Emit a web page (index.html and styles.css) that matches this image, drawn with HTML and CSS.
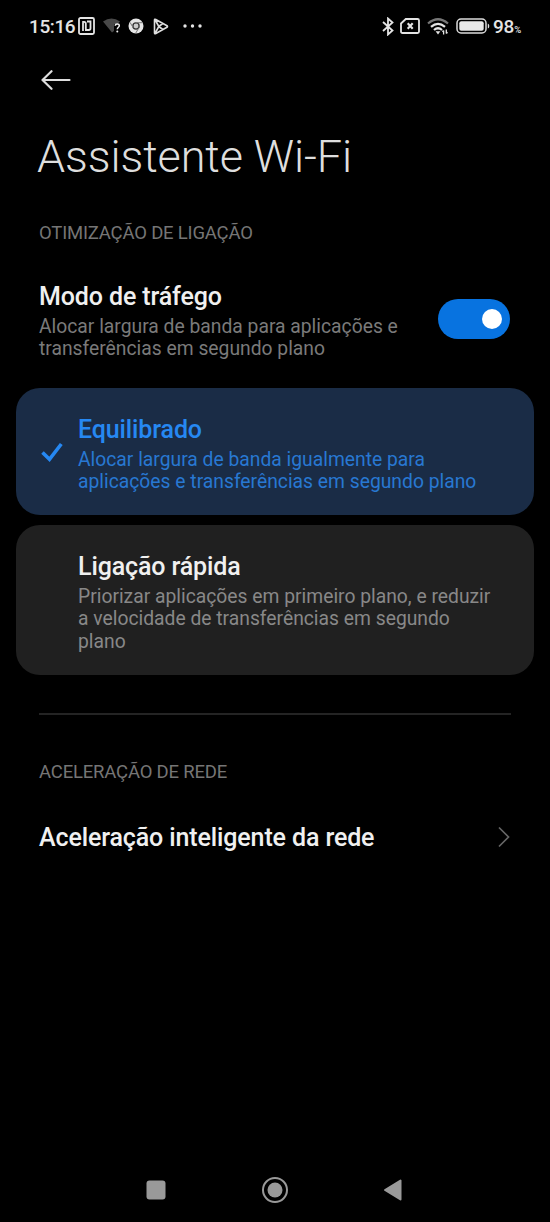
FILE: index.html
```html
<!DOCTYPE html>
<html lang="pt">
<head>
<meta charset="utf-8">
<title>Assistente Wi-Fi</title>
<link rel="stylesheet" href="styles.css">
</head>
<body>
<div class="screen">
  <header class="status">
    <div class="status-left">
      <span class="clock">15:16</span>
      <svg class="ico-nfc" width="17" height="18" viewBox="0 0 17 18" fill="none" stroke="#e4e4e4" stroke-width="1.8"><rect x="1" y="1" width="15" height="16" rx="1.500"/><path d="M5 14V5.500M4.200 4.800H6Q7.800 4.800 7.800 6.500V12M9 4.500h3.500v6.800Q12.500 13 10.800 13H7"/></svg>
      <svg class="ico-wifi-q" width="18" height="18" viewBox="0 0 18 18"><path d="M0 4.500Q8.500-1.500 17 4.500L14.500 7H11v7l-2 1.500z" fill="#484848"/><path d="M12.300 8.800c0-2.300 4-2.300 4 0 0 1.500-2 1.500-2 3.400" fill="none" stroke="#f0f0f0" stroke-width="1.500"/><circle cx="14.300" cy="14.500" r="1" fill="#f0f0f0"/></svg>
      <svg class="ico-chrome" width="16" height="16" viewBox="0 0 16 16"><circle cx="8" cy="8" r="7.500" fill="#e6e6e6"/><circle cx="8" cy="8" r="3.100" fill="#ccc" stroke="#333" stroke-width="1.300"/><path d="M8 4.700h6.500M5.100 9.600 2 4.300M10.900 9.700 7.800 15" stroke="#777" stroke-width="1"/></svg>
      <svg class="ico-play" width="16" height="17" viewBox="0 0 16 17" fill="none" stroke="#dedede" stroke-width="1.600" stroke-linejoin="round"><path d="M1.500 2.200Q1.500.8 2.800 1.500L14 7.700Q15 8.500 14 9.300L2.800 15.500Q1.500 16.200 1.500 14.800zM2 1.500l3.800 7L2 15.500M5.800 8.500l4-3M5.800 8.500l4 3"/></svg>
      <svg class="ico-more" width="19" height="4" viewBox="0 0 19 4" fill="#e4e4e4"><circle cx="2" cy="2" r="1.700"/><circle cx="9.500" cy="2" r="1.700"/><circle cx="17" cy="2" r="1.700"/></svg>
    </div>
    <div class="status-right">
      <svg class="ico-bt" width="12" height="19" viewBox="0 0 12 19" fill="none" stroke="#e4e4e4" stroke-width="1.800"><path d="M1 5l9.500 8.500L6 17.500v-16l4.500 4L1 14"/></svg>
      <svg class="ico-sim" width="20" height="16" viewBox="0 0 20 16" fill="none" stroke="#e4e4e4" stroke-width="1.800"><path d="M5.800 1H17.500Q19 1 19 2.500v11Q19 15 17.500 15h-15Q1 15 1 13.500V5.500z"/><path d="M7.700 5.300l5 5.400M12.700 5.300l-5 5.400" stroke-width="2.100"/></svg>
      <svg class="ico-wifi" width="22" height="17" viewBox="0 0 22 17" fill="none" stroke="#e4e4e4" stroke-width="2.200"><path d="M1 5.500Q11-3 21 5.500" stroke="#777"/><path d="M4 8.800q7-6 14 0M7 12q4-3.500 8 0"/><path d="M8.600 13.300h4.800L11 16.500z" fill="#e4e4e4" stroke="none"/><path d="M16.600 12.500v4M19.300 11.500v4M15.400 13.800l1.200-1.300M20.500 14.200l-1.200 1.300" stroke-width="1.300"/></svg>
      <svg class="ico-bat" width="34" height="16" viewBox="0 0 34 16"><rect x="1" y="1" width="29" height="14" rx="4" fill="none" stroke="#dcdcdc" stroke-width="1.500"/><rect x="3.300" y="3.300" width="24.400" height="9.400" rx="2" fill="#e8e8e8"/><path d="M31.800 5.500q1.500.5 1.500 2.500t-1.500 2.500z" fill="#dcdcdc"/></svg>
      <span class="percent">98<small>%</small></span>
    </div>
  </header>

  <nav class="appbar">
    <svg width="30" height="20" viewBox="0 0 30 20" fill="none" stroke="#dedede" stroke-width="2.200" stroke-linecap="round" stroke-linejoin="round"><path d="M28.500 10H1.500M10.500 1.200L1.500 10l9 8.800"/></svg>
  </nav>
  <h1 class="title">Assistente Wi-Fi</h1>

  <h2 class="section section-link">OTIMIZAÇÃO DE LIGAÇÃO</h2>
  <div class="row traffic">
    <div>
      <div class="item-title">Modo de tráfego</div>
      <div class="summary">Alocar largura de banda para aplicações e<br>transferências em segundo plano</div>
    </div>
    <div class="toggle"><span class="knob"></span></div>
  </div>

  <div class="options">
    <div class="card selected">
      <svg class="check" width="22" height="20" viewBox="0 0 22 20" fill="none" stroke="#2688f2" stroke-width="3.600"><path d="M1.500 10.500l7 6.800L20.300 2"/></svg>
      <div class="card-text">
        <div class="item-title">Equilibrado</div>
        <div class="summary">Alocar largura de banda igualmente para<br>aplicações e transferências em segundo plano</div>
      </div>
    </div>
    <div class="card">
      <div class="check"></div>
      <div class="card-text">
        <div class="item-title">Ligação rápida</div>
        <div class="summary">Priorizar aplicações em primeiro plano, e reduzir<br>a velocidade de transferências em segundo<br>plano</div>
      </div>
    </div>
  </div>

  <div class="divider"></div>
  <h2 class="section section-net">ACELERAÇÃO DE REDE</h2>
  <div class="row smart">
    <div class="item-title">Aceleração inteligente da rede</div>
    <svg class="chevron" width="12" height="22" viewBox="0 0 12 22" fill="none" stroke="#666" stroke-width="1.700"><path d="M1 1.500l9.500 9.500L1 20.500"/></svg>
  </div>

  <footer class="navbar">
    <svg width="20" height="20" viewBox="0 0 20 20"><rect x=".5" y=".5" width="19" height="19" rx="3" fill="#999"/></svg>
    <svg width="28" height="28" viewBox="0 0 28 28"><circle cx="14" cy="14" r="12" fill="none" stroke="#999" stroke-width="2"/><circle cx="14" cy="14" r="7.500" fill="#999"/></svg>
    <svg width="20" height="24" viewBox="0 0 20 24"><path d="M17.500 2.500v19L2 12z" fill="#999" stroke="#999" stroke-width="2" stroke-linejoin="round"/></svg>
  </footer>
</div>
</body>
</html>
```
FILE: styles.css
```css
* { box-sizing: border-box; }
body { margin: 0; background: #000; font-family: Roboto, sans-serif; }
h1, h2 { margin: 0; font-weight: 400; }
svg { display: block; flex: none; }
.screen { width: 550px; height: 1222px; display: flex; flex-direction: column; background: #000; white-space: nowrap; overflow: hidden; }

.status { height: 52px; padding: 0 29px; display: flex; justify-content: space-between; align-items: center; color: #e4e4e4; font-size: 19px; font-weight: 500; }
.status-left, .status-right { display: flex; align-items: center; }
.clock { width: 49px; letter-spacing: -.4px; }
.ico-wifi-q { margin-left: 8px; }
.ico-chrome { margin-left: 7px; }
.ico-play { margin-left: 9px; }
.ico-more { margin-left: 14px; }
.ico-sim { margin-left: 6px; }
.ico-wifi { margin-left: 7px; }
.ico-bat { margin-left: 7px; }
.percent { margin-left: 3px; letter-spacing: -.2px; }
.percent small { font-size: 9.500px; }

.appbar { height: 56px; padding: 18px 0 0 41px; }
.title { height: 118px; padding: 22px 0 0 37px; font-size: 45px; line-height: 53px; font-weight: 300; letter-spacing: -.1px; color: #dedede; }

.section { padding-left: 39px; font-size: 18.500px; line-height: 22px; letter-spacing: -.19px; color: #757575; }
.section-link { height: 57px; margin-top: -4px; }
.row { display: flex; align-items: center; justify-content: space-between; padding: 0 40px 0 39px; }
.traffic { height: 82px; margin-top: -1px; }
.item-title { padding-bottom: 4px; font-size: 25px; line-height: 30px; font-weight: 500; letter-spacing: -.12px; color: #f0f0f0; }
.summary { font-size: 19.300px; line-height: 22.400px; color: #7a7a7a; }
.traffic .item-title { margin-top: 4px; }
.toggle { width: 72px; height: 40px; border-radius: 20px; background: #0873e0; display: flex; align-items: center; justify-content: flex-end; padding-right: 8px; }
.knob { width: 20px; height: 20px; border-radius: 50%; background: #fff; }

.options { display: flex; flex-direction: column; gap: 10px; margin: 28px 16px 0; }
.card { display: flex; align-items: center; padding-left: 25px; height: 127px; border-radius: 24px; background: #202020; }
.card:last-child { height: 150px; }
.card-text { padding-top: 5px; }
.card .summary { color: #888; }
.selected { background: #1a2c46; }
.selected .item-title { color: #2688f2; }
.selected .summary { color: #2878d2; }
.check { width: 22px; margin-right: 15px; }

.divider { height: 2px; margin: 38px 39px 0; background: #242424; }
.section-net { margin-top: 46px; }
.smart { margin-top: 38px; height: 34px; }
.smart .item-title { padding-bottom: 0; }
.chevron { margin-bottom: 3px; }

.navbar { margin-top: auto; height: 64px; padding: 0 147px 0 146px; display: flex; align-items: center; justify-content: space-between; }
```
